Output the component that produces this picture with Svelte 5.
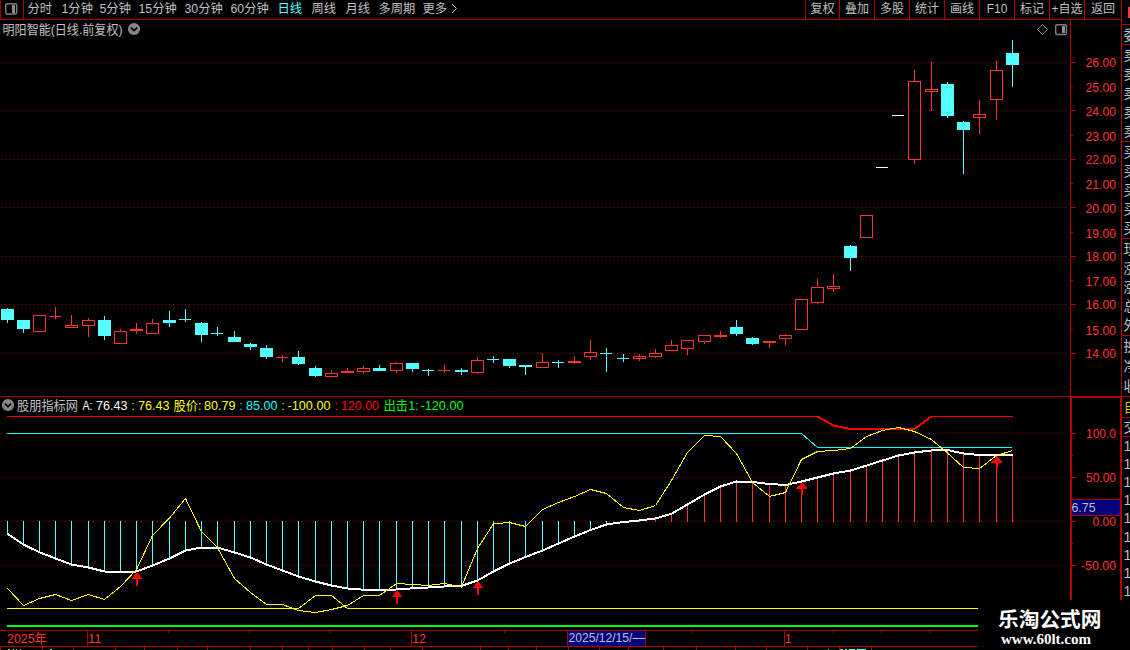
<script>
  const periods = [
    ['分时', 34], ['1分钟', 38], ['5分钟', 39], ['15分钟', 46], ['30分钟', 46], ['60分钟', 47],
    ['日线', 34], ['周线', 34], ['月线', 33], ['多周期', 44], ['更多', 28]
  ];
  const tools = ['复权', '叠加', '多股', '统计', '画线', 'F10', '标记', '+自选', '返回'];
  const toolWidths = [34, 35, 35, 35, 35, 35, 35, 35, 37];

  const cx = (i) => Math.floor(7.025 + 16.2135 * i);

  // direction, high, body top, body bottom, low
  const candles = [
    ['d', 308, 309, 320, 323], ['d', 320, 320, 329, 333], ['u', 315, 315, 332, 332], ['u', 307, 316, 317, 319],
    ['u', 315, 325, 328, 328], ['u', 318, 320, 326, 337], ['d', 316, 320, 336, 340], ['u', 329, 331, 344, 344],
    ['u', 323, 329, 331, 334], ['u', 319, 323, 334, 334], ['d', 311, 320, 323, 327], ['d', 309, 319, 320, 322],
    ['d', 322, 323, 335, 342], ['d', 327, 333, 334, 336], ['d', 331, 337, 342, 342], ['d', 343, 344, 347, 350],
    ['d', 345, 348, 357, 359], ['u', 355, 357, 358, 362], ['d', 351, 357, 364, 365], ['d', 366, 368, 376, 377],
    ['u', 370, 373, 377, 377], ['u', 368, 371, 373, 373], ['u', 366, 368, 372, 374], ['d', 365, 368, 371, 371],
    ['u', 362, 363, 371, 373], ['d', 363, 363, 369, 372], ['d', 369, 370, 371, 376], ['u', 365, 370, 371, 373],
    ['d', 368, 370, 372, 375], ['u', 357, 360, 373, 374], ['d', 356, 359, 360, 363], ['d', 359, 359, 366, 368],
    ['d', 365, 365, 367, 375], ['u', 353, 362, 368, 368], ['d', 360, 362, 363, 368], ['u', 356, 361, 363, 364],
    ['u', 340, 352, 357, 360], ['d', 348, 353, 354, 372], ['d', 354, 358, 359, 362], ['u', 354, 356, 359, 361],
    ['u', 349, 353, 357, 358], ['u', 340, 345, 351, 351], ['u', 340, 340, 349, 355], ['u', 335, 335, 342, 344],
    ['u', 331, 335, 337, 338], ['d', 320, 327, 334, 336], ['d', 337, 338, 344, 345], ['u', 341, 341, 343, 348],
    ['u', 334, 335, 339, 345], ['u', 299, 299, 330, 330], ['u', 279, 287, 303, 304], ['u', 274, 286, 289, 292],
    ['d', 245, 246, 258, 271], ['u', 215, 215, 238, 238], ['f', 167, 167, 168, 168], ['f', 115, 115, 116, 116],
    ['u', 70, 81, 160, 164], ['u', 62, 89, 92, 111], ['d', 82, 84, 116, 118], ['d', 121, 122, 130, 174],
    ['u', 100, 114, 118, 134], ['u', 61, 70, 100, 120], ['d', 40, 53, 65, 87]
  ];
  const colors = { u: '#ff3232', d: '#54ffff', f: '#ffffff' };

  const average = [
    533.7, 544.5, 552.3, 558.5, 564.5, 567.5, 571.5, 572, 571.5, 565.5, 558.5, 550.5, 547.5, 547.5, 552.5, 557.5,
    564.5, 570.5, 576.5, 581.5, 585.5, 588.5, 589.7, 590, 589.5, 588.3, 587.5, 586.5, 585.8, 580.5, 571.5, 563.5,
    557, 550.5, 543.5, 536.5, 530, 524.5, 522, 520.5, 518.5, 513.7, 504.5, 494.5, 486.5, 481.5, 482, 484, 485,
    481.5, 477.5, 473.5, 470.5, 465.6, 460.5, 455.5, 452.5, 450.4, 450, 453.5, 455, 455, 455
  ];
  const price = [
    588.5, 605.5, 598.5, 594.5, 600.5, 594.5, 599.5, 586.5, 569.5, 535.5, 518, 498.5, 531.7, 547.7, 578.5, 592.5,
    604.5, 604.5, 610.5, 612.5, 609.5, 605.5, 595.5, 595.5, 583.5, 584.5, 585.5, 583.5, 587, 548.5, 523.7, 522.5,
    526.5, 509.5, 502.5, 496.5, 489.5, 493.5, 507.5, 510.5, 505.5, 480.5, 452.5, 435.5, 436.5, 453.5, 482.5, 496.5,
    492.5, 459.5, 451.5, 450.5, 448.5, 436.5, 430.5, 427.5, 431.5, 439.5, 453, 467.5, 468.5, 455.5, 450.5
  ];
  const line = (values) => values.map((y, i) => `${cx(i) + 0.5},${y}`).join(' ');

  const arrows = [[137, 573], [397, 591], [478, 582], [802, 482.5], [997, 456.5]];

  const priceMarks = [
    ['26.00', 62, 62], ['25.00', 86, 87], ['24.00', 110, 111], ['23.00', 135, 136], ['22.00', 159, 159],
    ['21.00', 183, 184], ['20.00', 207, 208], ['19.00', 232, 233], ['18.00', 256, 256], ['17.00', 280, 281],
    ['16.00', 304, 304], ['15.00', 329, 330], ['14.00', 353, 353]
  ];
  const valueMarks = [['100.0', 433, 30], ['50.00', 477, 30], ['0.00', 521, 23.5], ['-50.00', 565, 35]];

  const legend = [
    ['股朋指标网', 17, 61, '#c0c0c0'], ['A:', 82.5, 10, '#ffffff'], ['76.43', 96, 31.5, '#ffffff'],
    [':', 131.5, 3, '#ffff00'], ['76.43', 138, 31.5, '#ffff00'], ['股价:', 173.5, 28, '#ffff00'],
    ['80.79', 204, 31.5, '#ffff00'], [':', 239.5, 3, '#00ffff'], ['85.00', 246, 31.5, '#00ffff'],
    [':', 281.5, 3, '#ffff00'], ['-100.00', 287.5, 43, '#ffff00'], [':', 335, 3, '#ff0000'],
    ['120.00', 341, 38, '#ff0000'], ['出击1:', 383.5, 35, '#00ff00'], ['-120.00', 420.5, 43, '#00ff00']
  ];

  const dateTicks = [168, 249, 330, 504, 691, 833, 881, 930];
  const footTicks = [
    0, 42, 73, 115, 144, 177, 207, 250, 282, 308, 332, 364, 390, 422, 480, 508, 536, 568, 599, 628, 663, 696, 735,
    766, 807, 839, 871
  ];
  const footBits = [
    [8, 2, 'w'], [13, 1, 'w'], [16, 1, 'w'], [20, 1, 'w'], [50, 2, 'w'], [828, 1, 'w'], [840, 3, 'w'],
    [845, 2, 'c'], [849, 6, 'c'], [857, 9, 'c']
  ];

  const quoteGroups = [
    ['', 25], ['委', 20], ['卖卖卖卖卖', 97], ['买买买买买', 97], ['现涨涨总外', 97], ['换净收', 61],
    ['自', 21, 'gold'], ['交', 19], ['111111111', 163, 'num']
  ];
</script>

{#snippet label(str, x, y, w, color)}
  <text {x} {y} fill={color} textLength={w} lengthAdjust="spacingAndGlyphs">{str}</text>
{/snippet}

{#snippet toggle(x, y)}
  <circle cx={x} cy={y} r="6.1" fill="#858585" />
  <path d="M{x - 3.2} {y - 1.4}l3.2 3l3.2 -3" fill="none" stroke="#000" stroke-width="1.7" />
{/snippet}

<div class="app">
  <div class="main">
    <div class="toolbar">
      <div class="pane-icon">
        <svg width="13" height="12">
          <rect x="0.75" y="0.75" width="11" height="10.2" rx="1.6" fill="none" stroke="#808080" stroke-width="1.4" />
          <rect x="7" y="2" width="3" height="8" fill="#909090" />
        </svg>
      </div>
      <div class="periods">
        {#each periods as [name, w]}
          <span class:active={name === '日线'} style:width="{w}px">{name}</span>
        {/each}
        <svg class="more" width="7" height="11"><path d="M1 1l4.5 4.5L1 10" fill="none" stroke="#c0c0c0" /></svg>
      </div>
      <div class="tools">
        {#each tools as name, i}
          <span style:width="{toolWidths[i]}px">{name}</span>
        {/each}
      </div>
    </div>

    <svg class="panel" width="1121" height="377" viewBox="0 20 1121 377">
      <g class="crisp">
        {#each priceMarks as [, y], i}
          {#if i % 2 === 0}
            <line class="dots" x1="1" x2="1068" y1={y + 0.5} y2={y + 0.5} />
          {/if}
          <rect class="frame" x="1071" {y} width={i % 2 ? 2 : 5} height="1" />
        {/each}
        <rect class="frame" x="1070" y="20" width="1" height="377" />
        <rect class="frame" x="0" y="396" width="1121" height="1" />
        {#each candles as [kind, high, top, bottom, low], i}
          {@const x = cx(i)}
          {@const thin = bottom - top === 1}
          {#if top > high}
            <rect {x} y={high} width="1" height={top - high} fill={colors[kind]} />
          {/if}
          {#if low > bottom}
            <rect {x} y={bottom} width="1" height={low - bottom} fill={colors[kind]} />
          {/if}
          {#if kind === 'u' && bottom - top > 2}
            <rect x={x - 5.5} y={top + 0.5} width="12" height={bottom - top - 1} fill="none" stroke={colors.u} />
          {:else}
            <rect x={x - 6} y={top} width={thin ? 12 : 13} height={bottom - top} fill={colors[kind]} />
          {/if}
        {/each}
      </g>
      {@render label('明阳智能(日线.前复权)', 2.5, 33.5, 120, '#c0c0c0')}
      {@render toggle(134, 29)}
      <path d="M1042.5 24.5l5 5l-5 5l-5 -5z" fill="none" stroke="#808080" />
      <rect x="1055.7" y="24.7" width="10.8" height="9.8" rx="1.6" fill="none" stroke="#808080" stroke-width="1.4" />
      <rect x="1062" y="26" width="3" height="7" fill="#909090" />
      {#each priceMarks as [str, , y]}
        {@render label(str, 1085.5, y + 5, 30.5, '#ff3232')}
      {/each}
    </svg>

    <svg class="panel" width="1121" height="233" viewBox="0 397 1121 233">
      <g class="crisp">
        {#each valueMarks as [, y]}
          <line class="dots" x1="1" x2="1068" y1={y + 0.5} y2={y + 0.5} />
          <rect class="frame" x="1071" {y} width="5" height="1" />
        {/each}
        <rect class="frame" x="1071" y="455" width="2" height="1" />
        <rect class="frame" x="1071" y="543" width="2" height="1" />
        <rect class="frame" x="1070" y="397" width="2" height="203" />
        <rect class="frame" x="1070" y="397" width="51" height="1" />
        <rect x="1072" y="500" width="48" height="15" fill="#000080" />
        <rect class="frame" x="1072" y="499" width="48" height="1" />
        <rect class="frame" x="1072" y="515" width="48" height="1" />
        <rect class="frame" x="1120" y="397" width="1" height="203" />

        {#each average as y, i}
          {#if i < 38}
            <rect x={cx(i)} y="521" width="1" height={Math.max(1, y - 521)} fill="#54ffff" />
          {:else if i > 38}
            <rect x={cx(i)} {y} width="1" height={522 - y} fill="#ff3232" />
          {/if}
        {/each}

        <rect x="7" y="416" width="811" height="1" fill="#ff0000" />
        <polyline points="817.5,416.5 833.5,425.5 850,429 914.5,429 931.5,416.5" stroke="#ff0000" stroke-width="2" />
        <rect x="931" y="416" width="82" height="1" fill="#ff0000" />
        <polyline points="7,433.5 801.5,433.5 817.5,447.5 1012,447.5" stroke="#00ffff" />
        <polyline points={line(average)} stroke="#ffffff" stroke-width="2" />
        <polyline points={line(price)} stroke="#ffff00" />
        <polyline points="7,608.5 298.5,608.5 315.5,595.5 331.5,595.5 347.5,608.5 978,608.5" stroke="#ffff00" />
        <rect x="7" y="625" width="971" height="2" fill="#00ff00" />
        {#each arrows as [x, y]}
          <path d="M{x} {y - 0.5}l5.5 6.5h-4.5v6.5h-2v-6.5h-4.5z" fill="#ff0000" />
        {/each}
      </g>
      {@render toggle(8, 405)}
      {#each legend as [str, x, w, color]}
        {@render label(str, x, 409.5, w, color)}
      {/each}
      {#each valueMarks as [str, y, w]}
        {@render label(str, 1116 - w, y + 5, w, '#ff3232')}
      {/each}
      {@render label('6.75', 1071.5, 511.5, 24, '#c0c0c0')}
    </svg>

    <svg class="panel" width="978" height="20" viewBox="0 630 978 20">
      <g class="crisp">
        <rect class="frame" x="0" y="630" width="978" height="1" />
        <rect class="frame" x="0" y="646" width="978" height="1" />
        {#each [87, 411, 784] as x}
          <rect class="frame" {x} y="630" width="1" height="16" />
        {/each}
        {#each dateTicks as x}
          <rect class="frame" {x} y="631" width="1" height="2" />
        {/each}
        {#each footTicks as x}
          <rect class="frame" {x} y="647" width="1" height="3" />
        {/each}
        {#each footBits as [x, w, c]}
          <rect {x} y="649" width={w} height="1" fill={c === 'w' ? '#c0c0c0' : '#54ffff'} />
        {/each}
        <rect x="568" y="631" width="77" height="15" fill="#000080" />
        <rect class="frame" x="567" y="631" width="1" height="15" />
        <rect class="frame" x="645" y="631" width="1" height="15" />
      </g>
      {@render label('2025年', 7, 643, 40, '#ff3232')}
      {@render label('11', 88, 643, 13.5, '#ff3232')}
      {@render label('12', 412, 643, 14, '#ff3232')}
      {@render label('1', 785, 643, 6.5, '#ff3232')}
      {@render label('2025/12/15/—', 568.5, 642, 76, '#c0c0c0')}
    </svg>
  </div>

  <div class="quotes">
    {#each quoteGroups as [chars, h, cls]}
      <div class="group {cls ?? ''}" style:height="{h}px">
        {#each chars as ch}<span>{ch}</span>{/each}
      </div>
    {/each}
  </div>

  <div class="brand">
    <div class="name">乐淘公式网</div>
    <div class="site">www.60lt.com</div>
  </div>
</div>

<style>
  :global(body) { background: #000; overflow: hidden; }
  .app {
    position: relative;
    display: grid;
    grid-template-columns: 1121px 9px;
    width: 1130px;
    height: 650px;
    overflow: hidden;
    background: #000;
    color: #c0c0c0;
    font: 12.3px/19px "Liberation Sans", "Noto Sans CJK SC", sans-serif;
  }
  .main { display: flex; flex-direction: column; }
  .toolbar {
    display: flex;
    box-sizing: border-box;
    height: 20px;
    border-bottom: 1px solid #b00000;
    white-space: nowrap;
  }
  .pane-icon {
    box-sizing: border-box;
    width: 24px;
    height: 19px;
    padding: 3px 0 0 4px;
    border: solid #b00000;
    border-width: 0 1px;
  }
  .pane-icon svg, .panel, .more { display: block; }
  .periods { display: flex; flex: 1; padding-left: 3.5px; }
  .active { color: #54ffff; }
  .more { margin-top: 3px; }
  .tools { display: flex; }
  .tools span {
    box-sizing: border-box;
    height: 19px;
    border-left: 1px solid #b00000;
    text-align: center;
    font-size: 12px;
  }
  .panel { flex: none; }
  .panel text { font-size: 12.6px; }
  .crisp { shape-rendering: crispEdges; }
  .frame { fill: #b00000; }
  .dots { stroke: #a00000; stroke-dasharray: 1 3; }
  polyline { fill: none; }
  .quotes { height: 600px; border-left: 1px solid #b00000; overflow: hidden; }
  .group {
    box-sizing: border-box;
    display: flex;
    flex-direction: column;
    justify-content: space-around;
    padding-left: 1.5px;
    border-bottom: 1px solid #b00000;
    font-size: 14px;
    line-height: 16px;
  }
  .group:first-child {
    background: linear-gradient(#ff3232, #ff3232) 6px 7px / 2px 11px no-repeat;
  }
  .gold { color: #c8c800; }
  .num { border-bottom: 0; font-size: 14px; }
  .brand {
    position: absolute;
    left: 978px;
    top: 600px;
    width: 152px;
    height: 50px;
    background: #000;
    color: #fff;
    font-weight: bold;
    white-space: nowrap;
  }
  .name {
    padding: 6px 0 0 20px;
    font: bold 20.7px/24px "Noto Sans CJK SC", sans-serif;
  }
  .site {
    padding: 1px 0 0 23px;
    font: bold 15px/16px "Liberation Serif", serif;
  }
</style>
